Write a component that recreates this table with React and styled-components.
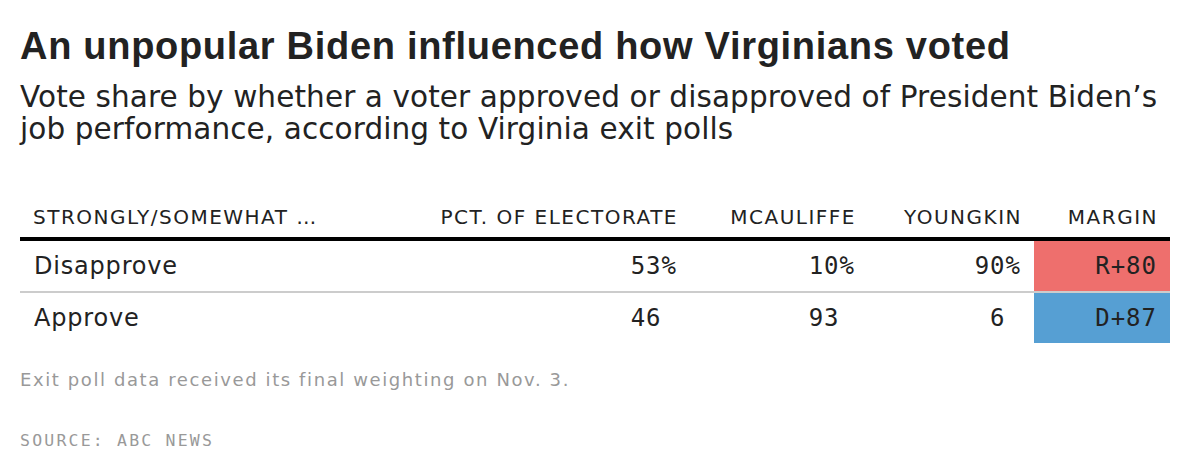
import React from "react";
import styled, { createGlobalStyle } from "styled-components";

const Global = createGlobalStyle`
  html, body { margin: 0; padding: 0; background: #fff; }
  body { font-family: "DejaVu Sans", "Liberation Sans", sans-serif; color: #222; }
`;

const Page = styled.div`
  width: 1184px;
  box-sizing: border-box;
  padding: 24px 4px 0 20px;
`;

const Title = styled.h1`
  margin: 0;
  font-family: "Liberation Sans", Arial, sans-serif;
  font-weight: 700;
  font-size: 38px;
  line-height: 44px;
  letter-spacing: 0.7px;
  color: #222;
`;

const Subtitle = styled.p`
  margin: 13px 0 0;
  font-family: "DejaVu Sans", sans-serif;
  font-size: 29.5px;
  line-height: 32px;
  letter-spacing: 0.1px;
  font-weight: 400;
  color: #222;
`;

const Table = styled.div`
  margin-top: 61px;
  width: 1150px;
`;

const Row = styled.div`
  display: grid;
  grid-template-columns: 396px 274px 178px 166px 136px;
  align-items: ${(p) => (p.$head ? "end" : "stretch")};
  border-bottom: ${(p) => (p.$head ? "4px solid #000" : p.$last ? "none" : "2px solid #ccc")};
  height: ${(p) => (p.$head ? "31px" : "50px")};
`;

const HeadCell = styled.div`
  font-family: "DejaVu Sans", sans-serif;
  font-size: 20px;
  line-height: 23px;
  letter-spacing: 1.5px;
  padding: 0 ${(p) => (p.$left ? "0" : "12px")} 8px 13px;
  text-align: ${(p) => (p.$left ? "left" : "right")};
  text-transform: uppercase;
  white-space: nowrap;
  color: #222;
`;

const LabelCell = styled.div`
  display: flex;
  align-items: center;
  padding-left: 14px;
  font-family: "DejaVu Sans", sans-serif;
  font-size: 24px;
  letter-spacing: 0.8px;
  color: #222;
`;

const NumCell = styled.div`
  display: flex;
  align-items: center;
  justify-content: flex-end;
  padding-right: 13px;
  font-family: "DejaVu Sans Mono", "Liberation Mono", monospace;
  font-size: 24px;
  letter-spacing: 1px;
  color: #222;
  background: ${(p) => p.$bg || "transparent"};
`;

const Ghost = styled.span`
  visibility: hidden;
`;

const Note = styled.p`
  margin: 26px 0 0;
  font-family: "DejaVu Sans", sans-serif;
  font-size: 18px;
  line-height: 22px;
  letter-spacing: 1.6px;
  color: #999;
`;

const Source = styled.p`
  margin: 41px 0 0;
  font-family: "DejaVu Sans Mono", "Liberation Mono", monospace;
  font-size: 16.5px;
  line-height: 18px;
  letter-spacing: 2.2px;
  color: #999;
`;

const rows = [
  { label: "Disapprove", pct: "53", mc: "10", yk: "90", pctSign: true, margin: "R+80", color: "#ee6f6d" },
  { label: "Approve", pct: "46", mc: "93", yk: "6", pctSign: false, margin: "D+87", color: "#569fd3" },
];

const Num = ({ v, sign }) => (
  <NumCell>
    {v}
    {sign ? "%" : <Ghost>%</Ghost>}
  </NumCell>
);

export default function App() {
  return (
    <>
      <Global />
      <Page>
        <Title>An unpopular Biden influenced how Virginians voted</Title>
        <Subtitle>
          Vote share by whether a voter approved or disapproved of President Biden’s job
          performance, according to Virginia exit polls
        </Subtitle>
        <Table>
          <Row $head>
            <HeadCell $left>Strongly/Somewhat …</HeadCell>
            <HeadCell>Pct. of electorate</HeadCell>
            <HeadCell>McAuliffe</HeadCell>
            <HeadCell>Youngkin</HeadCell>
            <HeadCell>Margin</HeadCell>
          </Row>
          {rows.map((r, i) => (
            <Row key={r.label} $last={i === rows.length - 1}>
              <LabelCell>{r.label}</LabelCell>
              <Num v={r.pct} sign={r.pctSign} />
              <Num v={r.mc} sign={r.pctSign} />
              <Num v={r.yk} sign={r.pctSign} />
              <NumCell $bg={r.color}>{r.margin}</NumCell>
            </Row>
          ))}
        </Table>
        <Note>Exit poll data received its final weighting on Nov. 3.</Note>
        <Source>SOURCE: ABC NEWS</Source>
      </Page>
    </>
  );
}
